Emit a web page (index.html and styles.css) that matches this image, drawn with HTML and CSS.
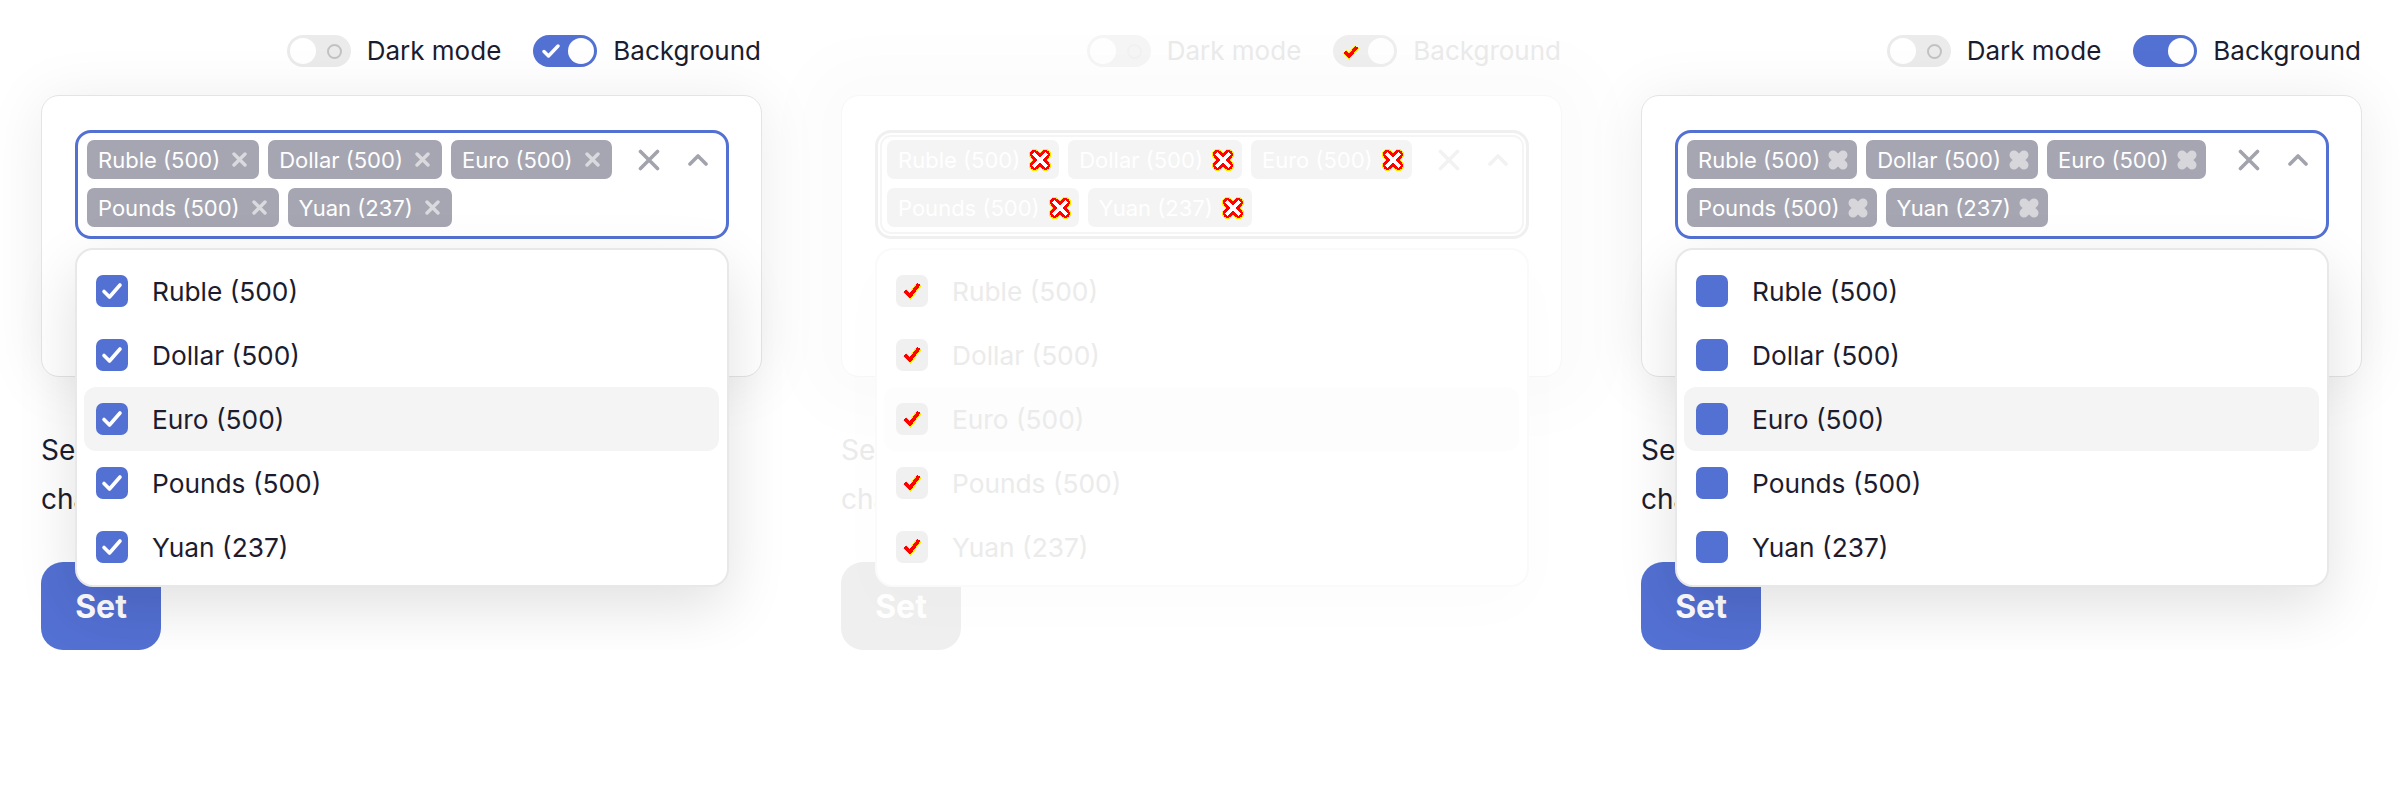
FILE: index.html
```html
<!DOCTYPE html>
<html>
<head>
<meta charset="utf-8">
<link rel="stylesheet" href="styles.css">
</head>
<body>
<div class="panels">

  <!-- Panel 1 -->
  <section class="panel">
    <div class="toggles">
      <div class="toggle"><span class="track off"><span class="knob"></span><span class="ring"></span></span>Dark mode</div>
      <div class="toggle"><span class="track on"><svg class="tcheck" viewBox="0 0 18 18"><polyline points="2,9.5 6.5,14 16,4" fill="none" stroke="#fff" stroke-width="3.4" stroke-linecap="round" stroke-linejoin="round"/></svg><span class="knob"></span></span>Background</div>
    </div>
    <div class="stage">
      <div class="card">
        <div class="select">
          <div class="tags">
            <span class="tag">Ruble (500)<svg class="tx" viewBox="0 0 15 15"><path d="M2 2L13 13M13 2L2 13" stroke="#d9d9de" stroke-width="3.4" stroke-linecap="round"/></svg></span>
            <span class="tag">Dollar (500)<svg class="tx" viewBox="0 0 15 15"><path d="M2 2L13 13M13 2L2 13" stroke="#d9d9de" stroke-width="3.4" stroke-linecap="round"/></svg></span>
            <span class="tag">Euro (500)<svg class="tx" viewBox="0 0 15 15"><path d="M2 2L13 13M13 2L2 13" stroke="#d9d9de" stroke-width="3.4" stroke-linecap="round"/></svg></span>
            <span class="tag">Pounds (500)<svg class="tx" viewBox="0 0 15 15"><path d="M2 2L13 13M13 2L2 13" stroke="#d9d9de" stroke-width="3.4" stroke-linecap="round"/></svg></span>
            <span class="tag">Yuan (237)<svg class="tx" viewBox="0 0 15 15"><path d="M2 2L13 13M13 2L2 13" stroke="#d9d9de" stroke-width="3.4" stroke-linecap="round"/></svg></span>
          </div>
          <div class="controls">
            <svg class="clear" viewBox="0 0 22 22"><path d="M2.5 2.5L19.5 19.5M19.5 2.5L2.5 19.5" stroke="#a3a3ad" stroke-width="3.6" stroke-linecap="round"/></svg>
            <svg class="chev" viewBox="0 0 20 12"><polyline points="2,10 10,2 18,10" fill="none" stroke="#a3a3ad" stroke-width="3.6" stroke-linecap="round" stroke-linejoin="round"/></svg>
          </div>
        </div>
        <div class="card-body"></div>
      </div>
      <p class="desc">Select the currencies you want to track on the<br>chart below.</p>
      <button class="btn">Set</button>
      <ul class="menu">
        <li class="item"><span class="box"><svg viewBox="0 0 32 32"><polyline points="8,16.5 13.5,22 24,10" fill="none" stroke="#fff" stroke-width="3.6" stroke-linecap="round" stroke-linejoin="round"/></svg></span>Ruble (500)</li>
        <li class="item"><span class="box"><svg viewBox="0 0 32 32"><polyline points="8,16.5 13.5,22 24,10" fill="none" stroke="#fff" stroke-width="3.6" stroke-linecap="round" stroke-linejoin="round"/></svg></span>Dollar (500)</li>
        <li class="item hover"><span class="box"><svg viewBox="0 0 32 32"><polyline points="8,16.5 13.5,22 24,10" fill="none" stroke="#fff" stroke-width="3.6" stroke-linecap="round" stroke-linejoin="round"/></svg></span>Euro (500)</li>
        <li class="item"><span class="box"><svg viewBox="0 0 32 32"><polyline points="8,16.5 13.5,22 24,10" fill="none" stroke="#fff" stroke-width="3.6" stroke-linecap="round" stroke-linejoin="round"/></svg></span>Pounds (500)</li>
        <li class="item"><span class="box"><svg viewBox="0 0 32 32"><polyline points="8,16.5 13.5,22 24,10" fill="none" stroke="#fff" stroke-width="3.6" stroke-linecap="round" stroke-linejoin="round"/></svg></span>Yuan (237)</li>
      </ul>
    </div>
  </section>

  <!-- Panel 2 (ghost) -->
  <section class="panel ghost">
    <div class="toggles">
      <div class="toggle"><span class="track off"><span class="knob"></span><span class="ring"></span></span>Dark mode</div>
      <div class="toggle"><span class="track on"><svg class="tcheck" viewBox="0 0 18 18" shape-rendering="crispEdges"><polyline points="3,10 7,14 15,5" fill="none" stroke="#ffee00" stroke-width="5.5" stroke-linejoin="miter"/><polyline points="3,10 7,14 15,5" fill="none" stroke="#ff0000" stroke-width="3.5"/></svg><span class="knob"></span></span>Background</div>
    </div>
    <div class="stage">
      <div class="card">
        <div class="select">
          <div class="tags">
            <span class="tag">Ruble (500)<svg class="rx" viewBox="0 0 24 24" shape-rendering="crispEdges"><path d="M6.5 6.5L17.5 17.5M17.5 6.5L6.5 17.5" stroke="#ffee00" stroke-width="11" stroke-linecap="round"/><path d="M6.5 6.5L17.5 17.5M17.5 6.5L6.5 17.5" stroke="#ff0000" stroke-width="9" stroke-linecap="round"/><path d="M6.5 6.5L17.5 17.5M17.5 6.5L6.5 17.5" stroke="#fff" stroke-width="4" stroke-linecap="round"/></svg></span>
            <span class="tag">Dollar (500)<svg class="rx" viewBox="0 0 24 24" shape-rendering="crispEdges"><path d="M6.5 6.5L17.5 17.5M17.5 6.5L6.5 17.5" stroke="#ffee00" stroke-width="11" stroke-linecap="round"/><path d="M6.5 6.5L17.5 17.5M17.5 6.5L6.5 17.5" stroke="#ff0000" stroke-width="9" stroke-linecap="round"/><path d="M6.5 6.5L17.5 17.5M17.5 6.5L6.5 17.5" stroke="#fff" stroke-width="4" stroke-linecap="round"/></svg></span>
            <span class="tag">Euro (500)<svg class="rx" viewBox="0 0 24 24" shape-rendering="crispEdges"><path d="M6.5 6.5L17.5 17.5M17.5 6.5L6.5 17.5" stroke="#ffee00" stroke-width="11" stroke-linecap="round"/><path d="M6.5 6.5L17.5 17.5M17.5 6.5L6.5 17.5" stroke="#ff0000" stroke-width="9" stroke-linecap="round"/><path d="M6.5 6.5L17.5 17.5M17.5 6.5L6.5 17.5" stroke="#fff" stroke-width="4" stroke-linecap="round"/></svg></span>
            <span class="tag">Pounds (500)<svg class="rx" viewBox="0 0 24 24" shape-rendering="crispEdges"><path d="M6.5 6.5L17.5 17.5M17.5 6.5L6.5 17.5" stroke="#ffee00" stroke-width="11" stroke-linecap="round"/><path d="M6.5 6.5L17.5 17.5M17.5 6.5L6.5 17.5" stroke="#ff0000" stroke-width="9" stroke-linecap="round"/><path d="M6.5 6.5L17.5 17.5M17.5 6.5L6.5 17.5" stroke="#fff" stroke-width="4" stroke-linecap="round"/></svg></span>
            <span class="tag">Yuan (237)<svg class="rx" viewBox="0 0 24 24" shape-rendering="crispEdges"><path d="M6.5 6.5L17.5 17.5M17.5 6.5L6.5 17.5" stroke="#ffee00" stroke-width="11" stroke-linecap="round"/><path d="M6.5 6.5L17.5 17.5M17.5 6.5L6.5 17.5" stroke="#ff0000" stroke-width="9" stroke-linecap="round"/><path d="M6.5 6.5L17.5 17.5M17.5 6.5L6.5 17.5" stroke="#fff" stroke-width="4" stroke-linecap="round"/></svg></span>
          </div>
          <div class="controls">
            <svg class="clear" viewBox="0 0 22 22"><path d="M2.5 2.5L19.5 19.5M19.5 2.5L2.5 19.5" stroke="#f2f2f2" stroke-width="3.6" stroke-linecap="round"/></svg>
            <svg class="chev" viewBox="0 0 20 12"><polyline points="2,10 10,2 18,10" fill="none" stroke="#f2f2f2" stroke-width="3.6" stroke-linecap="round" stroke-linejoin="round"/></svg>
          </div>
        </div>
        <div class="card-body"></div>
      </div>
      <p class="desc">Select the currencies you want to track on the<br>chart below.</p>
      <button class="btn">Set</button>
      <ul class="menu">
        <li class="item"><span class="box"><svg viewBox="0 0 32 32" shape-rendering="crispEdges"><polyline points="9,16 14,21 23,9" fill="none" stroke="#ffee00" stroke-width="5.5"/><polyline points="9,16 14,21 23,9" fill="none" stroke="#ff0000" stroke-width="3.5"/></svg></span>Ruble (500)</li>
        <li class="item"><span class="box"><svg viewBox="0 0 32 32" shape-rendering="crispEdges"><polyline points="9,16 14,21 23,9" fill="none" stroke="#ffee00" stroke-width="5.5"/><polyline points="9,16 14,21 23,9" fill="none" stroke="#ff0000" stroke-width="3.5"/></svg></span>Dollar (500)</li>
        <li class="item hover"><span class="box"><svg viewBox="0 0 32 32" shape-rendering="crispEdges"><polyline points="9,16 14,21 23,9" fill="none" stroke="#ffee00" stroke-width="5.5"/><polyline points="9,16 14,21 23,9" fill="none" stroke="#ff0000" stroke-width="3.5"/></svg></span>Euro (500)</li>
        <li class="item"><span class="box"><svg viewBox="0 0 32 32" shape-rendering="crispEdges"><polyline points="9,16 14,21 23,9" fill="none" stroke="#ffee00" stroke-width="5.5"/><polyline points="9,16 14,21 23,9" fill="none" stroke="#ff0000" stroke-width="3.5"/></svg></span>Pounds (500)</li>
        <li class="item"><span class="box"><svg viewBox="0 0 32 32" shape-rendering="crispEdges"><polyline points="9,16 14,21 23,9" fill="none" stroke="#ffee00" stroke-width="5.5"/><polyline points="9,16 14,21 23,9" fill="none" stroke="#ff0000" stroke-width="3.5"/></svg></span>Yuan (237)</li>
      </ul>
    </div>
  </section>

  <!-- Panel 3 -->
  <section class="panel">
    <div class="toggles">
      <div class="toggle"><span class="track off"><span class="knob"></span><span class="ring"></span></span>Dark mode</div>
      <div class="toggle"><span class="track on bare"><span class="knob"></span></span>Background</div>
    </div>
    <div class="stage">
      <div class="card">
        <div class="select">
          <div class="tags">
            <span class="tag">Ruble (500)<svg class="bx" viewBox="0 0 22 22"><path d="M6 6L16 16M16 6L6 16" stroke="#d6d6db" stroke-width="9" stroke-linecap="round"/></svg></span>
            <span class="tag">Dollar (500)<svg class="bx" viewBox="0 0 22 22"><path d="M6 6L16 16M16 6L6 16" stroke="#d6d6db" stroke-width="9" stroke-linecap="round"/></svg></span>
            <span class="tag">Euro (500)<svg class="bx" viewBox="0 0 22 22"><path d="M6 6L16 16M16 6L6 16" stroke="#d6d6db" stroke-width="9" stroke-linecap="round"/></svg></span>
            <span class="tag">Pounds (500)<svg class="bx" viewBox="0 0 22 22"><path d="M6 6L16 16M16 6L6 16" stroke="#d6d6db" stroke-width="9" stroke-linecap="round"/></svg></span>
            <span class="tag">Yuan (237)<svg class="bx" viewBox="0 0 22 22"><path d="M6 6L16 16M16 6L6 16" stroke="#d6d6db" stroke-width="9" stroke-linecap="round"/></svg></span>
          </div>
          <div class="controls">
            <svg class="clear" viewBox="0 0 22 22"><path d="M2.5 2.5L19.5 19.5M19.5 2.5L2.5 19.5" stroke="#a3a3ad" stroke-width="3.6" stroke-linecap="round"/></svg>
            <svg class="chev" viewBox="0 0 20 12"><polyline points="2,10 10,2 18,10" fill="none" stroke="#a3a3ad" stroke-width="3.6" stroke-linecap="round" stroke-linejoin="round"/></svg>
          </div>
        </div>
        <div class="card-body"></div>
      </div>
      <p class="desc">Select the currencies you want to track on the<br>chart below.</p>
      <button class="btn">Set</button>
      <ul class="menu">
        <li class="item"><span class="box"></span>Ruble (500)</li>
        <li class="item"><span class="box"></span>Dollar (500)</li>
        <li class="item hover"><span class="box"></span>Euro (500)</li>
        <li class="item"><span class="box"></span>Pounds (500)</li>
        <li class="item"><span class="box"></span>Yuan (237)</li>
      </ul>
    </div>
  </section>

</div>
</body>
</html>
```

FILE: styles.css
```css
body {
  margin: 0;
  background: #fff;
  font-family: Inter, "Noto Sans", sans-serif;
  color: #1c1c30;
}

.panels {
  display: flex;
}

.panel {
  width: 800px;
  box-sizing: border-box;
  padding: 35px 38px 0 41px;
}

/* toggles */
.toggles {
  display: flex;
  justify-content: flex-end;
  gap: 32px;
  height: 32px;
  padding-right: 1px;
}

.toggle {
  display: flex;
  align-items: center;
  gap: 16px;
  font-size: 26px;
  line-height: 32px;
}

.track {
  box-sizing: border-box;
  width: 64px;
  height: 32px;
  border-radius: 16px;
  background: #ebebeb;
  display: flex;
  align-items: center;
  justify-content: space-between;
}

.track.off {
  padding: 0 9px 0 3px;
}

.track.on {
  background: #5370d3;
  padding: 0 3px 0 9px;
}

.track.bare {
  justify-content: flex-end;
}

.knob {
  width: 26px;
  height: 26px;
  border-radius: 50%;
  background: #fff;
}

.ring {
  box-sizing: border-box;
  width: 15px;
  height: 15px;
  border-radius: 50%;
  border: 2px solid #c2c2c2;
}

.tcheck {
  width: 18px;
  height: 18px;
}

/* card */
.stage {
  position: relative;
  margin-top: 28px;
}

.card {
  border: 1px solid #e4e4e4;
  border-radius: 18px;
  padding: 34px 32px 33px 33px;
  background: #fff;
  box-shadow: 0 4px 60px rgba(0, 0, 0, 0.08);
}

.select {
  display: flex;
  align-items: flex-start;
  border: 3px solid #5370d3;
  border-radius: 16px;
  padding: 7px 18px 9px 9px;
}

.tags {
  flex: 1;
  display: flex;
  flex-wrap: wrap;
  gap: 9px;
}

.tag {
  display: flex;
  align-items: center;
  gap: 12px;
  height: 39px;
  padding: 0 12px 0 11px;
  border-radius: 7px;
  background: #a6a6b2;
  color: #fff;
  font-size: 22px;
}

.tx {
  width: 15px;
  height: 15px;
}

.rx {
  width: 24px;
  height: 24px;
  margin: 0 -5px 0 -4px;
}

.bx {
  width: 22px;
  height: 22px;
  margin: 0 -4px 0 -5px;
}

.controls {
  display: flex;
  align-items: center;
  gap: 28px;
  height: 39px;
  margin-left: 16px;
}

.clear {
  width: 22px;
  height: 22px;
}

.chev {
  width: 20px;
  height: 12px;
}

.card-body {
  height: 104px;
}

.desc {
  margin: 49px 0 0;
  font-size: 28px;
  line-height: 49px;
}

.btn {
  display: block;
  margin-top: 38px;
  width: 120px;
  height: 88px;
  border: 0;
  border-radius: 22px;
  background: #5370d3;
  color: #fff;
  font-family: Inter, "Noto Sans", sans-serif;
  font-weight: 700;
  font-size: 32px;
}

/* dropdown overlay */
.menu {
  position: absolute;
  top: 153px;
  left: 34px;
  width: 654px;
  box-sizing: border-box;
  margin: 0;
  padding: 9px 8px 6px 7px;
  list-style: none;
  background: #fff;
  border: 2px solid #e8e8e8;
  border-radius: 18px;
  box-shadow: 0 20px 60px rgba(0, 0, 0, 0.12);
}

.item {
  display: flex;
  align-items: center;
  gap: 24px;
  height: 64px;
  padding: 0 12px;
  border-radius: 12px;
  font-size: 26.3px;
}

.item.hover {
  background: #f4f4f4;
}

.box {
  width: 32px;
  height: 32px;
  border-radius: 7px;
  background: #5370d3;
  display: flex;
}

.box svg {
  width: 32px;
  height: 32px;
}

/* ghost panel */
.ghost {
  color: #ebebeb;
}

.ghost .track {
  background: #f6f6f6;
}

.ghost .track.on {
  background: #efefef;
}

.ghost .ring {
  border-color: #f2f2f2;
}

.ghost .card {
  border-color: #f7f7f7;
  box-shadow: 0 0 60px 40px rgba(0, 0, 0, 0.014);
}

.ghost .select {
  border-color: #f0f0f0;
  box-shadow: inset 0 0 0 2px #fff, inset 0 0 0 4px #f5f5f5;
}

.ghost .tag {
  background: #f4f4f4;
  color: #fff;
}

.ghost .menu {
  border-color: #fafafa;
  box-shadow: 0 20px 60px rgba(0, 0, 0, 0.015);
}

.ghost .item.hover {
  background: #fdfdfd;
}

.ghost .box {
  background: #f0f0f0;
}

.ghost .btn {
  background: #efefef;
}
```
